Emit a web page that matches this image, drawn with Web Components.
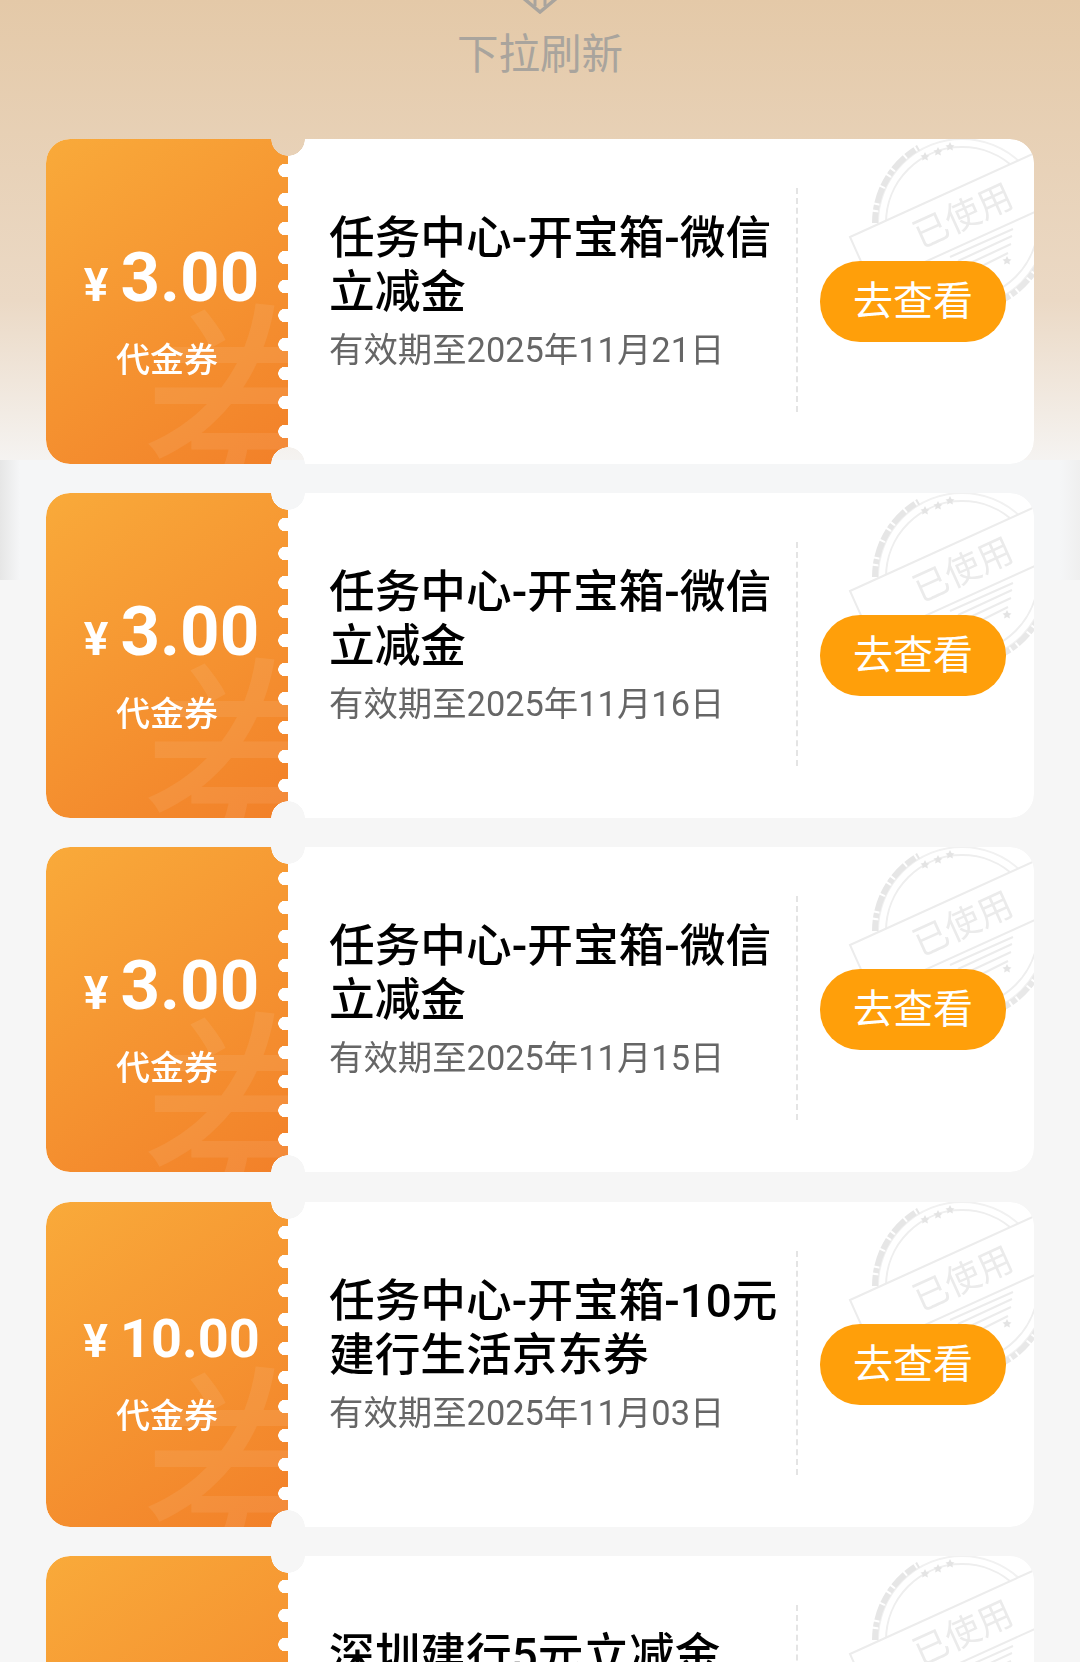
<!DOCTYPE html>
<html>
<head>
<meta charset="utf-8">
<style>
  html, body { margin: 0; height: 1662px; overflow: hidden; }
  body {
    font-family: Roboto, "Noto Sans CJK SC", sans-serif;
    background: #f6f6f6;
  }
</style>
</head>
<body>
<coupon-page>
  <pull-refresh>下拉刷新</pull-refresh>
  <coupon-card amount="3.00" date="有效期至2025年11月21日">任务中心-开宝箱-微信立减金</coupon-card>
  <coupon-card amount="3.00" date="有效期至2025年11月16日">任务中心-开宝箱-微信立减金</coupon-card>
  <coupon-card amount="3.00" date="有效期至2025年11月15日">任务中心-开宝箱-微信立减金</coupon-card>
  <coupon-card amount="10.00" small date="有效期至2025年11月03日">任务中心-开宝箱-10元建行生活京东券</coupon-card>
  <coupon-card amount="5.00" date="">深圳建行5元立减金</coupon-card>
</coupon-page>

<script>
const PageContent = `
  <style>
    :host {
      display: block;
      position: relative;
      height: 1662px;
      overflow: hidden;
      background: linear-gradient(#e4c9a8 0, #ebd9c5 300px, #f5f3f1 460px, #f6f6f6 480px);
    }
    /* leftover strip behind the second card */
    .strip {
      position: absolute;
      left: 0;
      right: 0;
      top: 460px;
      height: 120px;
      background:
        linear-gradient(90deg, #e6e6e6, #f5f6f7 20px, #f5f6f7 1060px, #efefef);
    }
    .list {
      position: relative;
      display: flex;
      flex-direction: column;
      gap: 29.2px;
      padding: 0 46px;
    }
  </style>
  <div class="strip"></div>
  <div class="list"><slot></slot></div>`;

class CouponPage extends HTMLElement {
  constructor() {
    super();
    this.attachShadow({ mode: "open" }).innerHTML = PageContent;
  }
}

const PullContent = `
  <style>
    :host {
      display: block;
      height: 139px;
      margin: 0 -46px -29.2px;
      color: #a9a49d;
      text-align: center;
      font-size: 41.5px;
      line-height: 50px;
    }
    svg { display: block; margin: 0 auto 16px; }
  </style>
  <svg width="40" height="14" viewBox="0 0 40 14" fill="none" stroke="#a9a49d" stroke-width="3.5">
    <path d="M2 -3 L20 12 L38 -3"/>
    <path d="M15 -2 V6 M25 -2 V6" stroke-width="3"/>
  </svg>
  <slot></slot>`;

class PullRefresh extends HTMLElement {
  constructor() {
    super();
    this.attachShadow({ mode: "open" }).innerHTML = PullContent;
  }
}

const StampContent = `
  <style>
    :host { display: block; position: absolute; right: 0; top: 0; width: 254px; height: 200px; }
    svg { display: block; }
    text { font-family: "Noto Sans CJK SC", sans-serif; }
  </style>
  <svg width="254" height="200" viewBox="0 0 254 200" fill="none">
    <circle cx="182" cy="84" r="84" stroke="#f1f1f1" stroke-width="2"/>
    <path d="M95 84 A87 87 0 0 1 138.5 8.7" stroke="#e6e6e6" stroke-width="6" stroke-dasharray="11 2 5 2 16 2"/>
    <path d="M260.8 120.8 A87 87 0 0 1 218.8 162.8" stroke="#e8e8e8" stroke-width="6" stroke-dasharray="14 2 6 2"/>
    <circle cx="182" cy="84" r="76" stroke="#eeeeee" stroke-width="2"/>
    <g fill="#e4e4e4">
      <path d="M145 13 l1.5 3 3 .4 -2.2 2.2 .6 3 -2.9 -1.5 -2.9 1.5 .6 -3 -2.2 -2.2 3 -.4z"/>
      <path d="M158 8 l1.5 3 3 .4 -2.2 2.2 .6 3 -2.9 -1.5 -2.9 1.5 .6 -3 -2.2 -2.2 3 -.4z"/>
      <path d="M170 3 l1.5 3 3 .4 -2.2 2.2 .6 3 -2.9 -1.5 -2.9 1.5 .6 -3 -2.2 -2.2 3 -.4z"/>
    </g>
    <path d="M70 98 L270 7 L292 56 L92 147Z" fill="#fff" stroke="#ececec" stroke-width="2"/>
    <text x="183" y="89" text-anchor="middle" font-size="35" fill="#ebebeb" transform="rotate(-24.5 183 77)">已使用</text>
    <path d="M170 118 L233 90 M178 122 L232 97 M186 126 L231 105 M196 130 L228 114" stroke="#ececec" stroke-width="2"/>
    <path d="M227 117 l1.5 3 3 .4 -2.2 2.2 .6 3 -2.9 -1.5 -2.9 1.5 .6 -3 -2.2 -2.2 3 -.4z" fill="#e4e4e4"/>
  </svg>`;

class UsedStamp extends HTMLElement {
  constructor() {
    super();
    this.attachShadow({ mode: "open" }).innerHTML = StampContent;
  }
}

const CardContent = `
  <style>
    :host { display: block; height: 325px; }
    .card {
      position: relative;
      display: flex;
      height: 100%;
      overflow: hidden;
      border-radius: 24px;
      background: #fff;
      -webkit-mask:
        radial-gradient(circle 17px at 242px 0, transparent 16.5px, #000 17px),
        radial-gradient(circle 17px at 242px 100%, transparent 16.5px, #000 17px);
      -webkit-mask-composite: source-in;
      mask-composite: intersect;
    }
    .left {
      position: relative;
      box-sizing: border-box;
      flex: 0 0 242px;
      display: flex;
      flex-direction: column;
      align-items: center;
      justify-content: center;
      gap: 15px;
      padding-top: 15px;
      overflow: hidden;
      color: #fff;
      background: linear-gradient(145deg, #f9aa3a, #f28029);
    }
    :host([small]) .left { gap: 23px; }
    .mark {
      position: absolute;
      left: 94px;
      top: 143px;
      font-size: 240px;
      line-height: 240px;
      font-family: "Noto Sans CJK SC", sans-serif;
      color: rgba(255, 255, 255, .08);
    }
    .teeth {
      position: absolute;
      right: 0;
      top: 16.5px;
      width: 10px;
      height: 290px;
      background: radial-gradient(circle 7px at 7px 14.5px, #fff 6.5px, transparent 7px) 0 0 / 10px 29px repeat-y;
    }
    .amount {
      position: relative;
      display: flex;
      align-items: baseline;
      gap: 12px;
      margin-left: 9px;
      font-size: 69px;
      line-height: 80px;
      font-weight: 700;
      white-space: nowrap;
    }
    :host([small]) .amount { font-size: 54px; line-height: 63px; }
    .yen { font-size: 46px; }
    .label { position: relative; font-size: 34px; line-height: 40px; font-weight: 500; }
    .body {
      flex: 1;
      display: flex;
      position: relative;
      min-width: 0;
    }
    .text { width: 458px; padding: 73px 0 0 41px; box-sizing: content-box; flex: none; }
    .title { font-size: 45.7px; line-height: 54px; color: #000; font-weight: 500; }
    .date { margin-top: 5px; font-size: 34.4px; line-height: 50px; color: #666; white-space: nowrap; }
    .divider {
      align-self: center;
      height: 224px;
      margin: 0 0 3px 9px;
      border-left: 2px dashed #e4e4e4;
    }
    .go {
      position: relative;
      align-self: center;
      width: 186px;
      height: 81px;
      margin-left: 22px;
      border-radius: 40px;
      background: #ff9f0a;
      color: #fff;
      font-size: 40px;
      line-height: 81px;
      text-align: center;
    }
  </style>
  <div class="card">
    <div class="left">
      <div class="mark">券</div>
      <div class="teeth"></div>
      <div class="amount"><span class="yen">¥</span><span id="amount"></span></div>
      <div class="label">代金券</div>
    </div>
    <div class="body">
      <used-stamp></used-stamp>
      <div class="text">
        <div class="title"><slot></slot></div>
        <div class="date" id="date"></div>
      </div>
      <div class="divider"></div>
      <div class="go">去查看</div>
    </div>
  </div>`;

class CouponCard extends HTMLElement {
  constructor() {
    super();
    this.attachShadow({ mode: "open" }).innerHTML = CardContent;
  }
  connectedCallback() {
    this.shadowRoot.getElementById("amount").textContent = this.getAttribute("amount");
    this.shadowRoot.getElementById("date").textContent = this.getAttribute("date");
  }
}

customElements.define("used-stamp", UsedStamp);
customElements.define("coupon-card", CouponCard);
customElements.define("pull-refresh", PullRefresh);
customElements.define("coupon-page", CouponPage);
</script>
</body>
</html>
